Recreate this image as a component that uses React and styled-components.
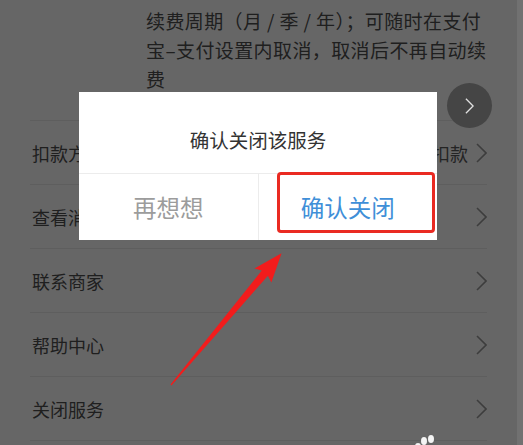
import React from 'react';
import styled, { createGlobalStyle } from 'styled-components';

const GlobalStyle = createGlobalStyle`
  html, body {
    margin: 0;
    padding: 0;
    background: #717171;
    overflow: hidden;
  }
  body {
    font-family: "Noto Sans CJK SC", "Noto Sans", sans-serif;
  }
`;

const Page = styled.div`
  width: 517px;
  height: 445px;
  background: #ffffff;
  position: relative;
  overflow: hidden;
`;

const Desc = styled.div`
  padding: 6px 0 27px 146px;
  font-size: 19px;
  line-height: 29px;
  letter-spacing: 0.4px;
  color: #4f4f4f;
`;

const DescLine = styled.div`
  white-space: nowrap;
`;

const List = styled.div`
  margin: 0 30px 0 30px;
`;

const Row = styled.div`
  height: 63px;
  border-top: 1px solid #ececec;
  display: flex;
  align-items: center;
  justify-content: space-between;
  padding-left: 2px;
  font-size: 18px;
  color: #4f4f4f;
`;

const RowRight = styled.div`
  display: flex;
  align-items: center;
  gap: 8px;
  color: #5a5a5a;
`;

const Overlay = styled.div`
  position: absolute;
  inset: 0;
  background: rgba(0, 0, 0, 0.6);
`;

const FloatBtn = styled.div`
  position: absolute;
  left: 447px;
  top: 83px;
  width: 45px;
  height: 45px;
  border-radius: 50%;
  background: #454545;
  display: flex;
  align-items: center;
  justify-content: center;
`;

const Dialog = styled.div`
  position: absolute;
  left: 79px;
  top: 92px;
  width: 358px;
  height: 148px;
  background: #fff;
  display: flex;
  flex-direction: column;
`;

const DialogTitle = styled.div`
  height: 82px;
  box-sizing: border-box;
  padding-top: 35px;
  text-align: center;
  font-size: 19.5px;
  line-height: 26px;
  color: #333;
  border-bottom: 1px solid #ececec;
`;

const Actions = styled.div`
  flex: 1;
  display: flex;
  position: relative;
`;

const ActionBtn = styled.div`
  flex: 1;
  display: flex;
  align-items: center;
  justify-content: center;
  font-size: 23.5px;
  color: ${p => (p.primary ? '#3f8fd8' : '#9c9c9c')};
  border-left: ${p => (p.primary ? '1px solid #ececec' : 'none')};
`;

const Highlight = styled.div`
  position: absolute;
  left: 198px;
  top: -2px;
  width: 158px;
  height: 61px;
  box-sizing: border-box;
  border: 3px solid #ea2a22;
  border-radius: 4px;
`;

const Annotation = styled.svg`
  position: absolute;
  left: 0;
  top: 0;
  pointer-events: none;
`;

const Chevron = ({ color = '#9a9a9a', w = 11, h = 20, sw = 1.6 }) => (
  <svg width={w} height={h} viewBox="0 0 11 20">
    <path d="M1 1 L10 10 L1 19" fill="none" stroke={color} strokeWidth={sw} />
  </svg>
);

const rows = [
  { label: '扣款方式', value: '余额自动扣款' },
  { label: '查看消费记录' },
  { label: '联系商家' },
  { label: '帮助中心' },
  { label: '关闭服务' },
  { label: '' },
];

export default function App() {
  return (
    <>
      <GlobalStyle />
      <Page>
        <Desc>
          <DescLine>续费周期（月 / 季 / 年）；可随时在支付</DescLine>
          <DescLine>宝–支付设置内取消，取消后不再自动续</DescLine>
          <DescLine>费</DescLine>
        </Desc>
        <List>
          {rows.map((r, i) => (
            <Row key={i}>
              <span>{r.label}</span>
              {r.label && (
                <RowRight>
                  {r.value && <span>{r.value}</span>}
                  <Chevron />
                </RowRight>
              )}
            </Row>
          ))}
        </List>

        <Overlay />

        <FloatBtn>
          <Chevron color="#e0e0e0" w={9} h={16} sw={1.6} />
        </FloatBtn>

        <Dialog>
          <DialogTitle>确认关闭该服务</DialogTitle>
          <Actions>
            <ActionBtn>再想想</ActionBtn>
            <ActionBtn primary>确认关闭</ActionBtn>
            <Highlight />
          </Actions>
        </Dialog>

        <Annotation width="517" height="445" viewBox="0 0 517 445">
          <polygon
            transform="translate(171 385) rotate(-50)"
            points="0,-0.6 146,-4 143,-11 172,0 143,11 146,4 0,0.6"
            fill="#f21c1c"
          />
          <g fill="#f4f4f4">
            <ellipse cx="424" cy="441" rx="3" ry="4" />
            <ellipse cx="431" cy="439" rx="3" ry="4" />
            <ellipse cx="418" cy="446" rx="3" ry="3" />
          </g>
        </Annotation>
      </Page>
    </>
  );
}
